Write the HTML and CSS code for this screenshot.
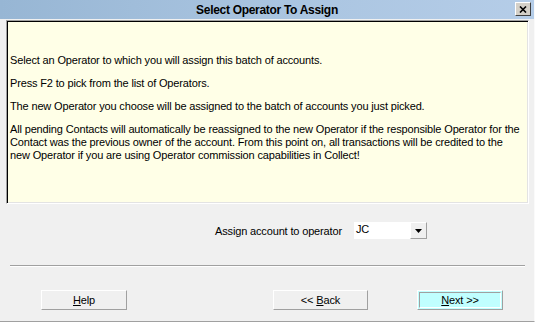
FILE: index.html
```html
<!DOCTYPE html>
<html lang="en">
<head>
	<meta charset="UTF-8">
	<title>Select Operator To Assign</title>
	<link rel="stylesheet" href="styles.css">
</head>
<body>
	<div class="window">
		<div class="titlebar">
			<span class="title">Select Operator To Assign</span>
			<button class="close"><svg viewBox="0 0 8 7"><path d="M1 0.5 L7 6.5 M7 0.5 L1 6.5"/></svg></button>
		</div>

		<div class="content">
			<div class="info">
				<p>Select an Operator to which you will assign this batch of accounts.</p>
				<p>Press F2 to pick from the list of Operators.</p>
				<p>The new Operator you choose will be assigned to the batch of accounts you just picked.</p>
				<p>All pending Contacts will automatically be reassigned to the new Operator if the responsible Operator for the Contact was the previous owner of the account. From this point on, all transactions will be credited to the new Operator if you are using Operator commission capabilities in Collect!</p>
			</div>

			<div class="assign">
				<label>Assign account to operator</label>
				<div class="combo">
					<span class="combo-value">JC</span>
					<span class="combo-btn"><svg viewBox="0 0 7 4"><polygon points="0 0 7 0 3.5 4"/></svg></span>
				</div>
			</div>

			<div class="separator"></div>

			<div class="buttons">
				<button class="btn btn-help"><u>H</u>elp</button>
				<button class="btn btn-back">&lt;&lt; <u>B</u>ack</button>
				<button class="btn btn-next"><span><u>N</u>ext &gt;&gt;</span></button>
			</div>
		</div>
	</div>
</body>
</html>
```

FILE: styles.css
```css
* {
	margin: 0;
	padding: 0;
	box-sizing: border-box;
}
body {
	background-color: #f0f0f0;
	font-family: "Liberation Sans", Arial, sans-serif;
	font-size: 11px;
	letter-spacing: -0.15px;
	color: black;
}

/* Window */
.window {
	width: 535px;
	height: 322px;
	display: flex;
	flex-direction: column;
	border-bottom: 1px solid #a0a0a0;
	border-right: 1px solid #fafafa;
}
.titlebar {
	height: 19px;
	display: flex;
	align-items: center;
	justify-content: center;
	position: relative;
	background: linear-gradient(to right, #97b6d4, #a9c4e0 50%, #b5cde8);
}
.title {
	font-weight: bold;
	font-size: 12px;
	letter-spacing: -0.3px;
}
.close {
	position: absolute;
	right: 3px;
	top: 2px;
	width: 16px;
	height: 14px;
	background-color: #d4d0c8;
	border: 1px solid;
	border-color: white #404040 #404040 white;
	display: flex;
	align-items: center;
	justify-content: center;
}
.close svg {
	width: 8px;
	height: 7px;
	stroke: black;
	stroke-width: 1.6;
}

/* Content */
.content {
	flex-grow: 1;
	display: flex;
	flex-direction: column;
	padding: 1px 5px 0 6px;
}
.info {
	height: 184px;
	background-color: #ffffe7;
	border: 1px solid;
	border-color: #a0a0a0 #ffffff #ffffff #a0a0a0;
	box-shadow: inset 1px 1px 0 #000000, inset -1px -1px 0 #e3e3e3;
	padding: 33px 5px 0 3px;
}
.info p {
	line-height: 13px;
	margin-bottom: 10px;
}

/* Assign row */
.assign {
	display: flex;
	align-items: center;
	gap: 12px;
	padding-left: 209px;
	margin-top: 18px;
}
.combo {
	display: flex;
	width: 73px;
	height: 17px;
	background-color: white;
}
.combo-value {
	flex-grow: 1;
	padding-left: 2px;
	line-height: 15px;
}
.combo-btn {
	width: 17px;
	height: 17px;
	background-color: #f0f0f0;
	border: 1px solid;
	border-color: white #a0a0a0 #a0a0a0 white;
	display: flex;
	align-items: center;
	justify-content: center;
}
.combo-btn svg {
	width: 7px;
	height: 4px;
}

.separator {
	margin: 26px 4px 0 4px;
	border-top: 1px solid #a0a0a0;
	border-bottom: 1px solid #ffffff;
}

/* Buttons */
.buttons {
	display: flex;
	padding-left: 35px;
	margin-top: 23px;
}
.btn {
	height: 20px;
	font-family: "Liberation Sans", Arial, sans-serif;
	font-size: 11px;
	letter-spacing: -0.15px;
	background-color: #f0f0f0;
	border: 1px solid;
	border-color: #ffffff #a0a0a0 #a0a0a0 #ffffff;
}
.btn-help {
	width: 86px;
}
.btn-back {
	width: 95px;
	margin-left: 146px;
}
.btn-next {
	width: 86px;
	margin-left: 49px;
	padding: 1px;
	background-color: #c0ffff;
}
.btn-next span {
	display: block;
	height: 100%;
	border: 1px solid;
	border-color: #a0a0a0 #ffffff #ffffff #a0a0a0;
	line-height: 14px;
}
```
